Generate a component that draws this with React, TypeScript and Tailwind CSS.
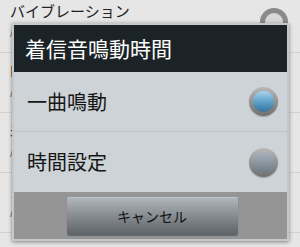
import React from 'react';

const font = { fontFamily: '"Noto Sans CJK JP", "Noto Sans", sans-serif' };

const Radio = ({ checked }: { checked: boolean }) => (
  <span className="flex h-[29px] w-[29px] items-center justify-center rounded-full bg-gradient-to-b from-[#b9b9b9] to-[#6f6f6f] shadow-[0_1px_1px_rgba(0,0,0,0.25)]">
    <span
      className={`h-[21px] w-[21px] rounded-full ${
        checked
          ? 'bg-gradient-to-b from-[#a6d6f0] via-[#5fa2c8] to-[#37739a]'
          : 'bg-gradient-to-b from-[#a9b4bd] to-[#6d7b86]'
      }`}
    />
  </span>
);

export default function App() {
  const rows = ['バイブレーション', 'LED', '着信音', 'スヌーズ'];

  return (
    <div className="relative h-[247px] w-[300px] overflow-hidden bg-[#e6e6e6]" style={font}>
      {/* 背景の設定リスト */}
      <div className="-mt-[7px] flex flex-col">
        {rows.map((r, i) => (
          <div key={r} className="flex h-[60px] items-start justify-between border-b border-[#d2d2d2] pl-[10px] pr-[12px]">
            <div className="flex flex-col pt-[7px]">
              <span className="text-[15px] leading-[22px] text-[#222]">{r}</span>
              <span className="text-[11px] leading-[16px] text-[#555]">/ 設定</span>
            </div>
            {i === 0 && (
              <span className="mt-[15px] h-[28px] w-[28px] rounded-full border-[5px] border-[#8a8a8a] bg-[#d8d8d8]" />
            )}
          </div>
        ))}
      </div>

      {/* ダイアログ */}
      <div className="absolute left-[12px] top-[23px] flex w-[277px] flex-col border-[2px] border-[#c4c8cb] shadow-[0_1px_4px_rgba(0,0,0,0.45)]">
        <div className="flex h-[47px] items-center bg-[#1c2327] pl-[11px] text-[21px] text-white">
          着信音鳴動時間
        </div>
        <div className="flex flex-col bg-[#cdd3d6]">
          <div className="flex h-[60px] items-center justify-between border-b border-[#bcc2c5] pl-[13px] pr-[9px]">
            <span className="text-[20px] text-[#161616]">一曲鳴動</span>
            <Radio checked />
          </div>
          <div className="flex h-[60px] items-center justify-between pl-[13px] pr-[9px]">
            <span className="text-[20px] text-[#161616]">時間設定</span>
            <Radio checked={false} />
          </div>
        </div>
        <div className="flex h-[47px] items-center justify-center bg-[#959595]">
          <button
            type="button"
            className="ml-[3px] flex h-[38px] w-[171px] items-center justify-center rounded-[2px] border-t border-[#c2c7cb] bg-gradient-to-b from-[#b0b5ba] to-[#5e6368] text-[14px] text-[#111] shadow-[0_1px_1px_rgba(0,0,0,0.3)]"
          >
            キャンセル
          </button>
        </div>
      </div>
    </div>
  );
}
